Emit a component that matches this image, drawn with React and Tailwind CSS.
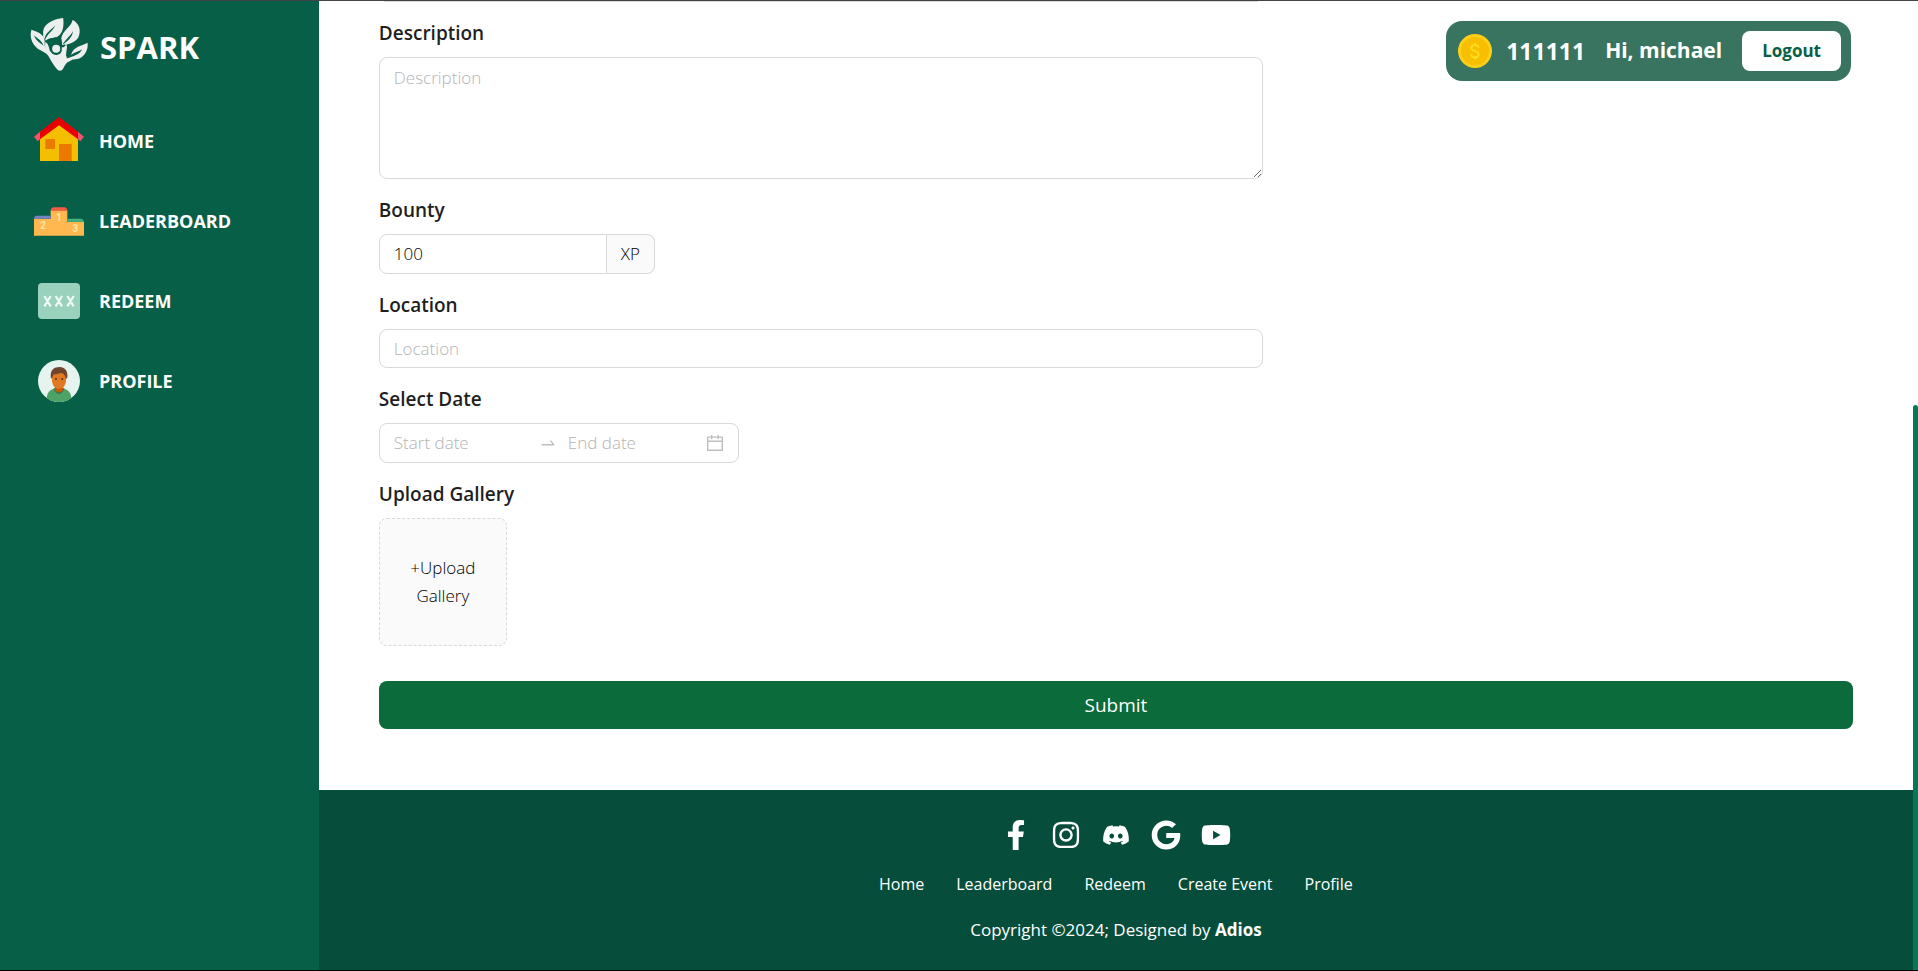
import { FaFacebookF, FaInstagram, FaGoogle, FaYoutube } from "react-icons/fa";
import { FaDiscord } from "react-icons/fa6";

const LogoIcon = () => (
  <svg viewBox="90 57 173 159" className="h-[53px] w-[58px]" aria-hidden="true">
    <g fill="#ecefee">
      <path d="M94 92C108 97 130 103 134 124L134 141C143 146 149 161 168 167C187 164 189 146 195 139C205 152 193 166 200 178L216 173C224 180 214 184 202 190C194 195 192 207 185 214Q179 217 173 213C163 203 154 189 147 175C139 158 124 160 108 145C93 132 88 110 94 92Z" />
      <path d="M189 57C162 60 132 72 129 96L129 114L139 128C142 119 155 118 169 115C190 103 192 79 189 57Z" />
      <path d="M217 63C214 84 186 93 183 120L185 139C202 137 224 132 234 116C244 97 238 72 217 63Z" />
      <path d="M262 131C248 140 217 142 213 168L203 181C222 182 240 182 252 167C261 156 264 145 262 131Z" />
    </g>
    <g fill="#085f47">
      <path d="M101 108C110 118 125 124 130 140C119 131 106 124 101 108Z" />
      <path d="M165 79C157 92 139 96 133 119L134 126C140 103 159 98 165 79Z" />
      <path d="M134 124C138 128 140 119 152 118L170 115L184 120L186 139L195 136L191 152L150 152L134 142Z" />
      <path d="M218 96C213 110 197 119 187 137C204 126 218 113 218 96Z" />
      <path d="M246 150C237 159 222 158 212 169L202 178C218 171 239 168 246 150Z" />
      <circle cx="168" cy="150" r="18" />
    </g>
    <circle cx="168" cy="149" r="12" fill="#ecefee" />
    <path d="M136 128C144 134 147 143 149 158L134 142Z" fill="#ecefee" />
    <path d="M185 144C190 148 195 140 199 137C205 150 190 157 200 176L184 172Z" fill="#ecefee" />
  </svg>
);

const HomeIcon = () => (
  <svg viewBox="102 351 150 144" className="h-12 w-[50px]" aria-hidden="true">
    <path d="M120 400L177 362L234 400V483H120Z" fill="#f4bf00" />
    <path d="M136 417H165V447H136ZM177 432H215V483H177Z" fill="#eb7900" />
    <path d="M177 351L234 395V418L177 376L120 418V395Z" fill="#e90000" />
    <path d="M120 395V418L113 424L102 410ZM234 395V418L241 424L252 410Z" fill="#ef5571" />
  </svg>
);

const PodiumIcon = () => (
  <svg viewBox="0 0 150 86" className="h-[29px] w-[50px]" aria-hidden="true">
    <path d="M0 35H50V9H100V44H150V86H0Z" fill="#ffb74f" />
    <path d="M0 35Q1 26 8 26H50V35Z" fill="#7582c4" />
    <path d="M50 11Q51 0 59 0H91Q99 0 100 11Z" fill="#f35c43" />
    <path d="M100 44V35H142Q149 36 150 44Z" fill="#42b084" />
    <g fill="#ffe3a5" fontFamily="Roboto, sans-serif" fontSize="31" fontWeight="700" textAnchor="middle">
      <text x="27" y="67">2</text>
      <text x="75" y="41">1</text>
      <text x="124" y="76">3</text>
    </g>
  </svg>
);

const RedeemIcon = () => (
  <svg viewBox="0 0 126 108" className="h-9 w-[42px]" aria-hidden="true">
    <rect width="126" height="108" rx="12" fill="#99d1bd" />
    <path
      d="M19 39L38 70M38 39L19 70M53 39L72 70M72 39L53 70M88 39L107 70M107 39L88 70"
      stroke="#eefaf5"
      strokeWidth="7"
    />
  </svg>
);

const ProfileIcon = () => (
  <svg viewBox="0 0 126 126" className="size-[42px]" aria-hidden="true">
    <circle cx="63" cy="63" r="63" fill="#e6f4ef" />
    <path d="M26 114C28 91 43 85 63 85S98 91 100 114A63 63 0 0 1 26 114Z" fill="#4fa267" />
    <path d="M46 86Q63 118 80 86L74 83H52Z" fill="#36784e" />
    <path d="M51 78H75V91Q63 104 51 91Z" fill="#c85a0c" />
    <path d="M42 45Q63 25 84 45V64Q82 85 63 87Q44 85 42 64Z" fill="#e17822" />
    <path d="M39 57C34 29 49 21 65 21C83 22 92 35 87 58L82 51Q79 40 68 39Q53 44 47 43L43 52Z" fill="#70442f" />
    <circle cx="54" cy="57" r="3" fill="#53321f" />
    <circle cx="73" cy="57" r="3" fill="#53321f" />
  </svg>
);

const CoinIcon = () => (
  <svg viewBox="0 0 102 102" className="size-[34px]" aria-hidden="true">
    <circle cx="51" cy="51" r="51" fill="#fdd017" />
    <circle cx="51" cy="51" r="42" fill="#f8be00" />
    <path
      d="M62 41Q61 33 51 33Q40 33 40 42Q40 49 51 51Q62 54 62 62Q62 70 51 70Q40 70 39 61M51 27V33M51 70V76"
      fill="none"
      stroke="#fddc1c"
      strokeWidth="6"
    />
  </svg>
);

const ArrowIcon = () => (
  <svg viewBox="0 0 1024 1024" className="size-[18px]" fill="#bfbfbf" aria-hidden="true">
    <path d="M873.1 596.2l-164-208A32 32 0 00684 376h-64.8c-6.7 0-10.4 7.7-6.3 13l144.3 183H152c-4.400 0-8 3.600-8 8v60c0 4.400 3.600 8 8 8h695.900c26.800 0 41.700-30.800 25.200-51.800z" />
  </svg>
);

const CalendarIcon = () => (
  <svg viewBox="64 64 896 896" className="ml-1 size-[18px]" fill="#bfbfbf" aria-hidden="true">
    <path d="M880 184H712v-64c0-4.400-3.600-8-8-8h-56c-4.400 0-8 3.600-8 8v64H384v-64c0-4.400-3.600-8-8-8h-56c-4.400 0-8 3.600-8 8v64H144c-17.700 0-32 14.300-32 32v664c0 17.700 14.300 32 32 32h736c17.700 0 32-14.300 32-32V216c0-17.700-14.300-32-32-32zm-40 656H184V460h656v380zM184 392V256h128v48c0 4.400 3.600 8 8 8h56c4.400 0 8-3.600 8-8v-48h256v48c0 4.400 3.600 8 8 8h56c4.400 0 8-3.600 8-8v-48h128v136H184z" />
  </svg>
);

const navItems = [
  { name: "HOME", Icon: HomeIcon },
  { name: "LEADERBOARD", Icon: PodiumIcon },
  { name: "REDEEM", Icon: RedeemIcon },
  { name: "PROFILE", Icon: ProfileIcon },
];

const socials = [
  { name: "Facebook", Icon: FaFacebookF, size: 30 },
  { name: "Instagram", Icon: FaInstagram, size: 30 },
  { name: "Discord", Icon: FaDiscord, size: 28 },
  { name: "Google", Icon: FaGoogle, size: 30 },
  { name: "YouTube", Icon: FaYoutube, size: 30 },
];

const footerLinks = ["Home", "Leaderboard", "Redeem", "Create Event", "Profile"];

const fieldClass =
  "rounded-lg border border-[#d9d9d9] bg-white px-3.5 font-light text-black placeholder:text-[#b4b4b4] outline-none";

function Field({ id, label, children }) {
  return (
    <div className="pt-[18px]">
      <label htmlFor={id} className="mb-2.5 block text-[19px] leading-[27px] font-semibold text-[#1f1f1f]">
        {label}
      </label>
      {children}
    </div>
  );
}

function Sidebar() {
  return (
    <aside className="w-1/6 shrink-0 bg-[#085f47] font-['Open_Sans',sans-serif] font-bold text-white">
      <a href="#" className="flex items-start gap-3 pt-[17px] pl-[30px]">
        <LogoIcon />
        <span className="text-[31px] leading-[59px]">SPARK</span>
      </a>
      <nav className="mt-6">
        {navItems.map(({ name, Icon }) => (
          <a key={name} href="#" className="flex h-20 items-center gap-[15px] pl-[34px]">
            <span className="flex w-[50px] justify-center">
              <Icon />
            </span>
            <span className="text-lg">{name}</span>
          </a>
        ))}
      </nav>
    </aside>
  );
}

function UserBar() {
  return (
    <header className="absolute top-5 right-[62px] flex h-[60px] items-center rounded-2xl bg-[#397460] pr-2.5 pl-3 font-['Open_Sans',sans-serif] font-bold text-white">
      <CoinIcon />
      <span className="ml-3.5 text-[23px]">111111</span>
      <span className="ml-5 text-[21px]">Hi, michael</span>
      <button type="button" className="ml-5 h-10 rounded-lg bg-white px-5 text-[17px] text-[#085f47]">
        Logout
      </button>
    </header>
  );
}

function EventForm() {
  return (
    <form className="px-[60px] pb-[61px]">
      <div className="w-3/5 px-[5px]">
        <div className="h-px bg-[#d9d9d9]" />
      </div>
      <Field id="description" label="Description">
        <textarea id="description" placeholder="Description" className={`${fieldClass} block h-[122px] w-3/5 py-[7px]`} />
      </Field>
      <Field id="bounty" label="Bounty">
        <div className="flex h-10 w-[276px]">
          <input id="bounty" defaultValue="100" className={`${fieldClass} min-w-0 flex-1 rounded-r-none`} />
          <span className="flex w-[48px] items-center justify-center rounded-r-lg border border-l-0 border-[#d9d9d9] bg-[#fafafa] font-light">
            XP
          </span>
        </div>
      </Field>
      <Field id="location" label="Location">
        <input id="location" placeholder="Location" className={`${fieldClass} block h-[39px] w-3/5`} />
      </Field>
      <Field id="start-date" label="Select Date">
        <div className={`${fieldClass} flex h-10 w-[360px] items-center`}>
          <input
            id="start-date"
            placeholder="Start date"
            className="min-w-0 flex-1 placeholder:text-[#b4b4b4] outline-none"
          />
          <span className="px-[11px]">
            <ArrowIcon />
          </span>
          <input
            aria-label="End date"
            placeholder="End date"
            className="min-w-0 flex-1 placeholder:text-[#b4b4b4] outline-none"
          />
          <CalendarIcon />
        </div>
      </Field>
      <Field id="gallery" label="Upload Gallery">
        <label
          htmlFor="gallery"
          className="flex size-32 items-center justify-center rounded-lg border border-dashed border-[#d9d9d9] bg-[#fafafa] px-5 text-center leading-7 font-light text-black"
        >
          +Upload Gallery
        </label>
        <input id="gallery" type="file" className="sr-only" />
      </Field>
      <button type="submit" className="mt-[35px] h-12 w-full rounded-lg bg-[#0b6b3b] text-[19px] text-white">
        Submit
      </button>
    </form>
  );
}

function Footer() {
  return (
    <footer className="flex flex-1 flex-col items-center bg-[#064e3b] pt-[30px] pb-[26px] text-white">
      <div className="flex gap-5">
        {socials.map(({ name, Icon, size }) => (
          <a key={name} href="#" aria-label={name} className="flex size-[30px] items-center justify-center">
            <Icon size={size} />
          </a>
        ))}
      </div>
      <nav className="mt-5 flex gap-8 text-base leading-7">
        {footerLinks.map((link) => (
          <a key={link} href="#">
            {link}
          </a>
        ))}
      </nav>
      <p className="mt-[18px] leading-7">
        Copyright ©2024; Designed by <b>Adios</b>
      </p>
    </footer>
  );
}

export default function App() {
  return (
    <div className="flex min-h-screen border-t border-t-[#444] border-b border-b-black bg-white font-['Open_Sans',sans-serif] text-[17px]">
      <div className="relative flex flex-1">
        <Sidebar />
        <main className="flex flex-1 flex-col">
          <EventForm />
          <Footer />
        </main>
        <UserBar />
      </div>
      <div className="flex w-[5px] flex-col">
        <div className="flex-5" />
        <div className="flex-7 rounded-t-full bg-[#047857]" />
      </div>
    </div>
  );
}
